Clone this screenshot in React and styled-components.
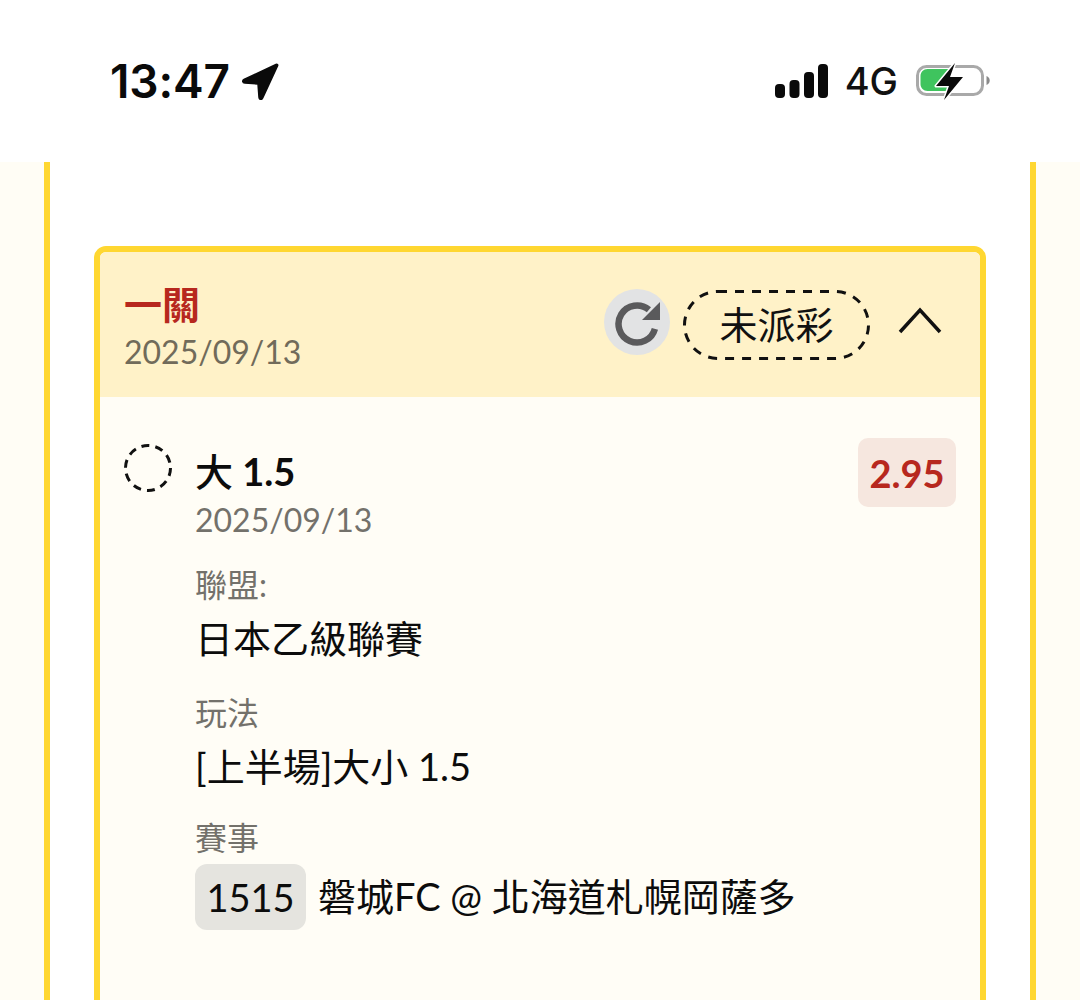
import React from 'react'
import styled, { createGlobalStyle } from 'styled-components'

const Global = createGlobalStyle`
  html, body { margin: 0; padding: 0; background: #fff; }
  body { font-family: Lato, "Noto Sans CJK TC", sans-serif; overflow: hidden; }
`

const Screen = styled.div`
  width: 1080px;
  height: 1000px;
  overflow: hidden;
  background: #fffdf5;
`

const StatusBar = styled.div`
  height: 162px;
  box-sizing: border-box;
  background: #fff;
  padding: 0 90px 0 110px;
  display: flex;
  align-items: center;
  justify-content: space-between;
`

const TimeGroup = styled.div`
  display: flex;
  align-items: center;
  gap: 11px;
`

const Time = styled.span`
  font-family: Inter, sans-serif;
  font-size: 46px;
  font-weight: 600;
  letter-spacing: -0.1px;
  color: #0a0a0a;
`

const StatusIcons = styled.div`
  display: flex;
  align-items: center;
  gap: 18px;
`

const Network = styled.span`
  margin-left: -1px;
  font-family: Inter, sans-serif;
  font-size: 38px;
  font-weight: 500;
  color: #111;
`

const Panel = styled.div`
  margin: 0 44px;
  height: 838px;
  box-sizing: border-box;
  padding: 84px 44px 0;
  background: #fff;
  border-left: 6px solid #ffd731;
  border-right: 6px solid #ffd731;
`

const Card = styled.div`
  height: 800px;
  border: 6px solid #ffd731;
  border-radius: 12px;
  overflow: hidden;
  background: #fffdf6;
`

const CardHeader = styled.div`
  height: 145px;
  box-sizing: border-box;
  padding: 30px 38px 0 24px;
  background: #fff2c8;
  display: flex;
  justify-content: space-between;
  align-items: flex-start;
`

const Heading = styled.div`
  display: flex;
  flex-direction: column;
`

const Title = styled.div`
  font-size: 38px;
  line-height: 44px;
  font-weight: 700;
  color: #b7281e;
`

const HeaderDate = styled.div`
  font-size: 32px;
  line-height: 52px;
  color: #716b5a;
`

const Actions = styled.div`
  display: flex;
  align-items: center;
  gap: 13px;
  margin-top: 7px;
`

const RefreshButton = styled.div`
  width: 66px;
  height: 66px;
  margin-bottom: 8px;
  border-radius: 50%;
  background: #e2e3e4;
  display: flex;
  align-items: center;
  justify-content: center;
`

const StatusPill = styled.div`
  position: relative;
  width: 187px;
  height: 70px;
  margin-bottom: 2px;
  box-sizing: border-box;
  padding-bottom: 6px;
  display: flex;
  align-items: center;
  justify-content: center;
  font-size: 38px;
  color: #111;
`

const PillOutline = styled.svg`
  position: absolute;
  inset: 0;
`

const Chevron = styled.svg`
  margin-left: 15px;
  margin-bottom: 12px;
`

const CardBody = styled.div`
  padding: 41px 24px 0 24px;
  display: flex;
  gap: 23px;
`

const SelectionMark = styled.svg`
  flex: none;
  margin-top: 6px;
`

const Details = styled.div`
  flex: 1;
`

const BetRow = styled.div`
  display: flex;
  justify-content: space-between;
  align-items: flex-start;
`

const BetName = styled.div`
  margin-top: 9px;
  font-size: 38px;
  line-height: 48px;
  font-weight: 700;
  color: #0c0c0c;
`

const BetKind = styled.span`
  font-weight: 500;
`

const Odds = styled.div`
  width: 98px;
  height: 69px;
  border-radius: 10px;
  background: #f6e7df;
  color: #b7281e;
  font-size: 38px;
  font-weight: 700;
  display: flex;
  align-items: center;
  justify-content: center;
`

const BetDate = styled.div`
  margin-top: -6px;
  font-size: 32px;
  line-height: 38px;
  color: #73716b;
`

const Field = styled.div`
  margin-top: ${(props) => (props.$tight ? 22 : 25)}px;
`

const FieldLabel = styled.div`
  font-size: 32px;
  line-height: 42px;
  color: #73716b;
`

const FieldValue = styled.div`
  display: flex;
  align-items: center;
  gap: 12px;
  min-height: 62px;
  margin-top: -1px;
  font-size: 38px;
  color: #0c0c0c;
`

const MatchNo = styled.span`
  width: 111px;
  height: 66px;
  margin-top: 6px;
  border-radius: 12px;
  background: #e5e4df;
  display: flex;
  align-items: center;
  justify-content: center;
`

const LocationArrow = () => (
  <svg width="38" height="38" viewBox="0 0 38 38">
    <path d="M35 2.500 3 17.500c-2 1-1.500 3.500 .8 3.600L17 22l1 13.500c.2 2.300 2.800 2.700 3.600.6L36.500 4c.6-1.200-.3-2-1.500-1.500Z" fill="#0a0a0a" stroke="#0a0a0a" strokeWidth="1.500" strokeLinejoin="round" />
  </svg>
)

const Signal = () => (
  <svg width="53" height="34" viewBox="0 0 53 34">
    <rect x="0" y="20" width="10" height="14" rx="4" fill="#0a0a0a" />
    <rect x="14.500" y="16" width="10" height="18" rx="4" fill="#0a0a0a" />
    <rect x="29" y="8" width="10" height="26" rx="4" fill="#0a0a0a" />
    <rect x="43" y="0" width="10" height="34" rx="4" fill="#0a0a0a" />
  </svg>
)

const Battery = () => (
  <svg width="74" height="38" viewBox="0 0 74 38">
    <rect x="1.500" y="4.500" width="65" height="28" rx="9" fill="none" stroke="#a9a9a9" strokeWidth="3" />
    <path d="M4.500 14c0-4 3-7 7-7h22v22H11.500c-4 0-7-3-7-7Z" fill="#3fc45e" />
    <path d="M70.500 14c2 .6 3.200 2.400 3.200 4.500s-1.200 3.900-3.200 4.500Z" fill="#8a8a8a" />
    <path d="M39 1 20 24h13l-5 14 19-23H34L39 1Z" fill="#0a0a0a" stroke="#fff" strokeWidth="3" strokeLinejoin="round" paintOrder="stroke" />
  </svg>
)

const RefreshIcon = () => (
  <svg width="48" height="48" viewBox="0 0 48 48">
    <path d="M41.900 30.800A18.500 18.500 0 1 1 35.900 11.800" fill="none" stroke="#5a5a5c" strokeWidth="6.500" />
    <path d="M47 4v18H29Z" fill="#5a5a5c" />
  </svg>
)

const App = () => (
  <Screen>
    <Global />
    <StatusBar>
      <TimeGroup>
        <Time>13:47</Time>
        <LocationArrow />
      </TimeGroup>
      <StatusIcons>
        <Signal />
        <Network>4G</Network>
        <Battery />
      </StatusIcons>
    </StatusBar>
    <Panel>
      <Card>
        <CardHeader>
          <Heading>
            <Title>一關</Title>
            <HeaderDate>2025/09/13</HeaderDate>
          </Heading>
          <Actions>
            <RefreshButton><RefreshIcon /></RefreshButton>
            <StatusPill>
              <PillOutline width="187" height="70" viewBox="0 0 187 70">
                <rect x="1.500" y="1.500" width="184" height="67" rx="33.500" fill="none" stroke="#111" strokeWidth="3" strokeDasharray="9 8" />
              </PillOutline>
              未派彩
            </StatusPill>
            <Chevron width="44" height="28" viewBox="0 0 44 28">
              <path d="M2 26 22 4l20 22" fill="none" stroke="#111" strokeWidth="3.500" />
            </Chevron>
          </Actions>
        </CardHeader>
        <CardBody>
          <SelectionMark width="48" height="48" viewBox="0 0 48 48">
            <circle cx="24" cy="24" r="22.500" fill="none" stroke="#111" strokeWidth="3" strokeDasharray="8 6.100" />
          </SelectionMark>
          <Details>
            <BetRow>
              <BetName><BetKind>大</BetKind> 1.5</BetName>
              <Odds>2.95</Odds>
            </BetRow>
            <BetDate>2025/09/13</BetDate>
            <Field>
              <FieldLabel>聯盟:</FieldLabel>
              <FieldValue>日本乙級聯賽</FieldValue>
            </Field>
            <Field>
              <FieldLabel>玩法</FieldLabel>
              <FieldValue>[上半場]大小 1.5</FieldValue>
            </Field>
            <Field $tight>
              <FieldLabel>賽事</FieldLabel>
              <FieldValue>
                <MatchNo>1515</MatchNo>
                磐城FC @ 北海道札幌岡薩多
              </FieldValue>
            </Field>
          </Details>
        </CardBody>
      </Card>
    </Panel>
  </Screen>
)

export default App
